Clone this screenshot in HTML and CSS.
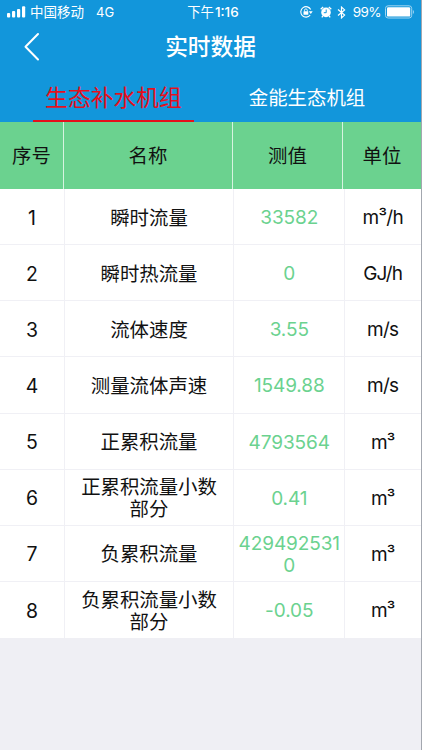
FILE: index.html
```html
<!DOCTYPE html>
<html lang="zh-CN">
<head>
<meta charset="utf-8">
<title>实时数据</title>
<link rel="stylesheet" href="styles.css">
</head>
<body>
<div class="screen">
  <header class="top">
    <div class="status">
      <div class="status-left">
        <svg class="signal" width="19" height="12" viewBox="0 0 19 12" fill="#fff"><rect x="0" y="7" width="3.2" height="4.5" rx="1"/><rect x="5" y="5" width="3.2" height="6.5" rx="1"/><rect x="10" y="3" width="3.2" height="8.5" rx="1"/><rect x="15" y=".3" width="3.2" height="11.2" rx="1"/></svg>
        <span class="carrier">中国移动</span>
        <span class="network">4G</span>
      </div>
      <div class="clock">下午<span class="time">1:16</span></div>
      <div class="status-right">
        <svg class="lock" width="13" height="12" viewBox="0 0 13 12" fill="none" stroke="#fff"><path d="M10.7 3.6A5.2 5.2 0 1 0 10.2 9" stroke-width="1.1"/><path d="M8.8 5.2h3.9L10.8 8z" fill="#fff" stroke="none"/><rect x="3.5" y="5.3" width="4.8" height="3.5" rx=".4" fill="#fff" stroke="none"/><path d="M4.5 5.5V4.3a1.4 1.4 0 0 1 2.8 0v1.2" stroke-width=".9"/></svg>
        <svg class="alarm" width="12" height="12" viewBox="0 0 12 12" fill="none" stroke="#fff"><circle cx="6" cy="6.4" r="4.8" fill="#fff" stroke="none"/><path d="M.7 3.2 3.2.9M11.3 3.2 8.8.9M2.9 10 1.8 11.3M9.1 10l1.1 1.3" stroke-width="1.3"/><path d="M6.2 3.5v3.2H3.8" stroke="#1296db" stroke-width="1"/></svg>
        <svg class="bluetooth" width="9" height="13" viewBox="0 0 9 13" fill="none" stroke="#fff" stroke-width="1.2"><path d="M1 3.5 7.6 9.1 4.5 11.9V1.1l3.1 2.8L1 9.5"/></svg>
        <span class="percent">99%</span>
        <svg class="battery" width="30" height="14" viewBox="0 0 30 14"><rect x=".5" y=".8" width="26.2" height="12.2" rx="2.6" fill="none" stroke="#a0d5f1"/><rect x="2" y="2.2" width="23.2" height="9.4" rx="1.2" fill="#fff"/><path d="M27.9 5v4c1.4-.5 1.4-3.5 0-4z" fill="#a0d5f1"/></svg>
      </div>
    </div>
    <div class="nav">
      <svg class="back" width="18" height="30" viewBox="0 0 18 30" fill="none" stroke="#fff" stroke-width="2" stroke-linecap="round" stroke-linejoin="round"><path d="M15 2 2.5 14.8 15 27.5"/></svg>
      <h1 class="title">实时数据</h1>
    </div>
    <nav class="tabs">
      <div class="tab active"><span>生态补水机组</span></div>
      <div class="tab"><span>金能生态机组</span></div>
    </nav>
  </header>
  <div class="row head"><div>序号</div><div>名称</div><div>测值</div><div>单位</div></div>
  <main class="rows">
    <div class="row"><div>1</div><div>瞬时流量</div><div class="value">33582</div><div class="unit">m³/h</div></div>
    <div class="row"><div>2</div><div>瞬时热流量</div><div class="value">0</div><div class="unit">GJ/h</div></div>
    <div class="row"><div>3</div><div>流体速度</div><div class="value">3.55</div><div class="unit">m/s</div></div>
    <div class="row"><div>4</div><div>测量流体声速</div><div class="value">1549.88</div><div class="unit">m/s</div></div>
    <div class="row"><div>5</div><div>正累积流量</div><div class="value">4793564</div><div class="unit">m³</div></div>
    <div class="row"><div>6</div><div>正累积流量小数<br>部分</div><div class="value">0.41</div><div class="unit">m³</div></div>
    <div class="row"><div>7</div><div>负累积流量</div><div class="value">429492531<br>0</div><div class="unit">m³</div></div>
    <div class="row"><div>8</div><div>负累积流量小数<br>部分</div><div class="value">-0.05</div><div class="unit">m³</div></div>
  </main>
</div>
</body>
</html>
```
FILE: styles.css
```css
* { box-sizing: border-box; }
body {
  margin: 0;
  background: #efeff4;
  color: #111;
  font-family: Inter, "Noto Sans CJK SC", sans-serif;
}
.screen {
  width: 422px;
  height: 750px;
  overflow: hidden;
  border-right: 1px solid rgba(70, 80, 90, .45);
}
.top {
  height: 122px;
  background: #1296db;
  color: #fff;
}
.status {
  display: grid;
  grid-template-columns: 1fr auto 1fr;
  height: 24px;
  padding: 0 6px 0 7px;
  align-items: center;
  font-size: 13px;
  line-height: 24px;
}
.status-left, .status-right { display: flex; align-items: center; }
.status-right { justify-content: flex-end; }
.carrier { margin-left: 4px; font-size: 13.5px; font-weight: 400; }
.network { margin-left: 12px; font-weight: 400; }
.clock { padding-left: 4px; font-size: 13.3px; font-weight: 400; }
.time { margin-left: 1px; font-size: 13.5px; font-weight: 500; }
.lock { margin-right: -1px; }
.alarm { margin-left: 8px; }
.bluetooth { margin-left: 5px; }
.percent { margin: 0 4px 0 7px; font-size: 13.5px; font-weight: 400; letter-spacing: -.6px; }
.battery { flex: none; }
.nav {
  display: grid;
  grid-template-columns: 50px 1fr 50px;
  height: 46px;
  align-items: center;
}
.back { margin-left: 23px; }
.title {
  margin: 0;
  text-align: center;
  font-size: 22.7px;
  font-weight: 500;
  line-height: 46px;
}
.tabs { display: flex; height: 52px; padding-left: 10px; }
.tab {
  width: 180px;
  text-align: center;
  font-size: 19.4px;
  font-weight: 400;
  line-height: 57px;
}
.tab span { display: inline-block; height: 52px; }
.tab.active { width: 207px; color: #e5101c; font-size: 22.8px; line-height: 55px; }
.active span { width: 161px; border-bottom: 2px solid #e5101c; }
.row {
  display: grid;
  grid-template-columns: 65px 169px 110.5px 1fr;
  height: 56.125px;
  background: #fff;
  font-size: 19.4px;
  line-height: 22px;
}
.row > div {
  display: flex;
  align-items: center;
  justify-content: center;
  padding-top: 2px;
  text-align: center;
  border-right: 1px solid #f0f0f5;
  border-bottom: 1px solid #f0f0f5;
}
.row > div:last-child { border-right: 0; }
.rows .row:last-child > div { border-bottom: 0; }
.row.head {
  grid-template-columns: 64px 169px 110px 1fr;
  height: 67px;
  background: #6bd28f;
}
.row.head > div { padding-top: 1px; border-bottom: 0; border-color: #d7f3e0; }
.row .value { padding: 3px 0 0 1px; color: #6bd28f; font-size: 19px; letter-spacing: -.1px; }
.row .unit { padding-top: 3px; font-size: 19px; letter-spacing: -.7px; }
```
